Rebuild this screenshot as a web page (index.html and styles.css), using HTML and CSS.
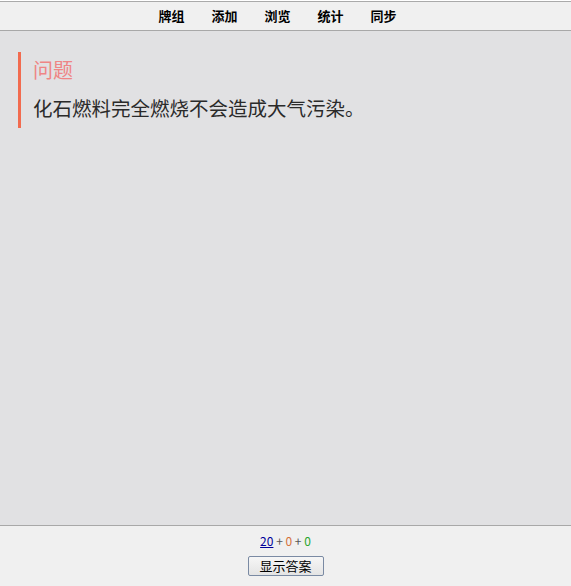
FILE: index.html
```html
<!DOCTYPE html>
<html lang="zh-CN">
<head>
    <meta charset="UTF-8">
    <meta name="viewport" content="width=device-width, initial-scale=1.0">
    <title>Anki</title>
    <link rel="stylesheet" href="styles.css">
</head>
<body>
    <!-- 顶部导航 -->
    <header class="topbar">
        <a href="#">牌组</a>
        <a href="#">添加</a>
        <a href="#">浏览</a>
        <a href="#">统计</a>
        <a href="#">同步</a>
    </header>

    <!-- 卡片区域 -->
    <main class="main">
        <div class="card">
            <div class="card_title">问题</div>
            <div class="card_text">化石燃料完全燃烧不会造成大气污染。</div>
        </div>
    </main>

    <!-- 底部 -->
    <footer class="bottombar">
        <div class="counts">
            <a href="#" class="new">20</a> + <span class="learn">0</span> + <span class="review">0</span>
        </div>
        <button class="answerBtn">显示答案</button>
    </footer>
</body>
</html>
```

FILE: styles.css
```css
html, body {
    height: 100%;
}

body {
    margin: 0;
    display: flex;
    flex-direction: column;
    background-color: #fff;
    font-family: "Noto Sans CJK SC", "Liberation Sans", sans-serif;
}

.topbar {
    margin-top: 1px;
    height: 28px;
    display: flex;
    justify-content: center;
    align-items: center;
    gap: 27px;
    padding-right: 16px;
    background-color: #f0f0f0;
    border-top: 1px solid #aaa;
    border-bottom: 1px solid #a8a8a8;
}

.topbar a {
    color: #000;
    font-size: 13px;
    font-weight: bold;
    text-decoration: none;
    line-height: 16px;
}

.main {
    flex: 1;
    background-color: #e1e1e3;
    padding: 21px 18px 0;
}

.card {
    border-left: 3px solid #f26b4f;
    padding: 4px 0 6px 12px;
}

.card_title {
    color: #ef8585;
    font-size: 20px;
    line-height: 28px;
}

.card_text {
    margin-top: 10px;
    color: #2a2a2a;
    font-size: 19.5px;
    line-height: 28px;
}

.bottombar {
    height: 61px;
    box-sizing: border-box;
    padding-top: 7px;
    background-color: #f0f0f0;
    border-top: 1px solid #a8a8a8;
    text-align: center;
}

.counts {
    font-size: 12px;
    line-height: 16px;
    color: #555;
}

.counts .new {
    color: #000099;
}

.counts .learn {
    color: #d5703a;
}

.counts .review {
    color: #2aa52a;
}

.answerBtn {
    display: block;
    margin: 7px auto 0;
    width: 76px;
    height: 20px;
    padding: 0;
    font-family: "Noto Sans CJK SC", sans-serif;
    font-size: 13px;
    line-height: 18px;
    color: #000;
    border: 1px solid #7a8aa3;
    border-radius: 2px;
    background: linear-gradient(#f6f6f6, #e4e4e4);
}
```
